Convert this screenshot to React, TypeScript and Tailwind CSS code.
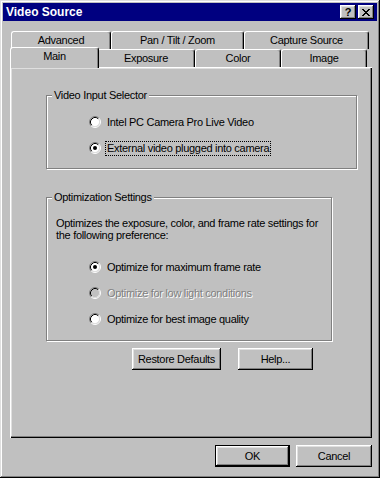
import React from "react";

const bevel =
  "shadow-[inset_-1px_-1px_0_#000,inset_1px_1px_0_#fff,inset_-2px_-2px_0_#808080,inset_2px_2px_0_#dfdfdf]";

function Radio({ checked, disabled }: { checked?: boolean; disabled?: boolean }) {
  return (
    <svg width="12" height="12" viewBox="0 0 12 12" className="shrink-0">
      <circle cx="6" cy="6" r="4.5" fill={disabled ? "#c0c0c0" : "#fff"} />
      <path d="M2.11 9.89A5.5 5.5 0 0 1 9.89 2.11" fill="none" stroke="#808080" />
      <path d="M9.89 2.11A5.5 5.5 0 0 1 2.11 9.89" fill="none" stroke="#fff" />
      <path d="M2.82 9.18A4.5 4.5 0 0 1 9.18 2.82" fill="none" stroke="#000" />
      <path d="M9.18 2.82A4.5 4.5 0 0 1 2.82 9.18" fill="none" stroke="#dfdfdf" />
      {checked && <circle cx="6" cy="6" r="2" fill={disabled ? "#808080" : "#000"} />}
    </svg>
  );
}

function RadioRow({
  label,
  checked,
  disabled,
  focused,
}: {
  label: string;
  checked?: boolean;
  disabled?: boolean;
  focused?: boolean;
}) {
  return (
    <div className="flex h-[16px] items-center gap-[4px]">
      <Radio checked={checked} disabled={disabled} />
      <span
        className={
          "border px-[1px] leading-[13px] whitespace-nowrap " +
          (focused ? "border-dotted border-black " : "border-transparent ") +
          (disabled ? "text-[#808080] [text-shadow:1px_1px_0_#fff]" : "text-black")
        }
      >
        {label}
      </span>
    </div>
  );
}

function Tab({ label, w, selected }: { label: string; w: string; selected?: boolean }) {
  return (
    <div
      className={
        "flex items-center justify-center rounded-tl-[3px] rounded-tr-[3px] border-l border-t border-r border-l-white border-t-white border-r-black bg-[#c0c0c0] shadow-[inset_-1px_0_0_#808080] whitespace-nowrap " +
        w +
        (selected ? " relative z-10 -mx-[2px] -mt-[2px] -mb-[1px] h-[21px] pb-[3px]" : " h-[18px]")
      }
    >
      {label}
    </div>
  );
}

function Button({ label, w, def }: { label: string; w: string; def?: boolean }) {
  if (def) {
    return (
      <div className={"border border-black " + w}>
        <div className={"flex h-[20px] items-center justify-center bg-[#c0c0c0] " + bevel}>{label}</div>
      </div>
    );
  }
  return (
    <div className={"flex h-[22px] items-center justify-center bg-[#c0c0c0] " + bevel + " " + w}>{label}</div>
  );
}

function Group({
  title,
  w,
  mt,
  children,
  pb,
}: {
  title: string;
  w: string;
  mt: string;
  pb: string;
  children: React.ReactNode;
}) {
  return (
    <fieldset
      className={
        "border border-[#808080] shadow-[inset_1px_1px_0_#fff,1px_1px_0_#fff] " + w + " " + mt + " " + pb
      }
    >
      <legend className="ml-[5px] bg-[#c0c0c0] px-[2px] leading-[13px]">{title}</legend>
      {children}
    </fieldset>
  );
}

export default function App() {
  return (
    <div className="h-[478px] w-[380px] bg-[#c0c0c0] p-[3px] font-['Liberation_Sans',Arial,sans-serif] text-[11px] tracking-[-0.3px] text-black shadow-[inset_-1px_-1px_0_#000,inset_1px_1px_0_#dfdfdf,inset_-2px_-2px_0_#808080,inset_2px_2px_0_#fff]">
      {/* Title bar */}
      <div className="flex h-[18px] items-center justify-between bg-[#000080] pl-[3px] pr-[3px]">
        <span className="text-[12px] font-bold tracking-normal text-white">Video Source</span>
        <div className="flex gap-[2px]">
          <div className={"flex h-[14px] w-[16px] items-center justify-center bg-[#c0c0c0] " + bevel}>
            <span className="text-[11px] font-bold leading-none tracking-normal">?</span>
          </div>
          <div className={"flex h-[14px] w-[16px] items-center justify-center bg-[#c0c0c0] " + bevel}>
            <svg width="8" height="7" viewBox="0 0 8 7" shapeRendering="crispEdges">
              <path
                d="M0 0h2v1H0zM6 0h2v1H6zM1 1h2v1H1zM5 1h2v1H5zM2 2h4v1H2zM3 3h2v1H3zM2 4h4v1H2zM1 5h2v1H1zM5 5h2v1H5zM0 6h2v1H0zM6 6h2v1H6z"
                fill="#000"
              />
            </svg>
          </div>
        </div>
      </div>

      {/* Tabs */}
      <div className="mt-[10px] flex h-[18px] pl-[8px]">
        <Tab label="Advanced" w="w-[100px]" />
        <Tab label="Pan / Tilt / Zoom" w="w-[133px]" />
        <Tab label="Capture Source" w="w-[125px]" />
      </div>
      <div className="flex h-[18px] pl-[9px]">
        <Tab label="Main" w="w-[89px]" selected />
        <Tab label="Exposure" w="w-[98px]" />
        <Tab label="Color" w="w-[86px]" />
        <Tab label="Image" w="w-[86px]" />
      </div>

      {/* Panel */}
      <div className="ml-[7px] flex h-[371px] w-[362px] flex-col pl-[36px] shadow-[inset_1px_1px_0_#fff,inset_-1px_-1px_0_#000,inset_-2px_-2px_0_#808080,inset_2px_2px_0_#dfdfdf]">
        <Group title="Video Input Selector" w="w-[311px]" mt="mt-[22px]" pb="pb-[12px]">
          <div className="flex flex-col gap-[10px] pl-[42px] pt-[12px]">
            <RadioRow label="Intel PC Camera Pro Live Video" />
            <RadioRow label="External video plugged into camera" checked focused />
          </div>
        </Group>

        <Group title="Optimization Settings" w="w-[286px]" mt="mt-[22px]" pb="pb-[13px]">
          <p className="pl-[9px] pt-[13px] leading-[12px] whitespace-nowrap">
            Optimizes the exposure, color, and frame rate settings for
            <br />
            the following preference:
          </p>
          <div className="mt-[18px] flex flex-col gap-[10px] pl-[42px]">
            <RadioRow label="Optimize for maximum frame rate" checked />
            <RadioRow label="Optimize for low light conditions" disabled />
            <RadioRow label="Optimize for best image quality" />
          </div>
        </Group>

        <div className="ml-[86px] mt-[7px] flex gap-[17px]">
          <Button label="Restore Defaults" w="w-[89px]" />
          <Button label="Help..." w="w-[75px]" />
        </div>
      </div>

      {/* Bottom buttons */}
      <div className="mr-[5px] mt-[7px] flex justify-end gap-[6px]">
        <Button label="OK" w="w-[75px]" def />
        <Button label="Cancel" w="w-[76px]" />
      </div>
    </div>
  );
}
